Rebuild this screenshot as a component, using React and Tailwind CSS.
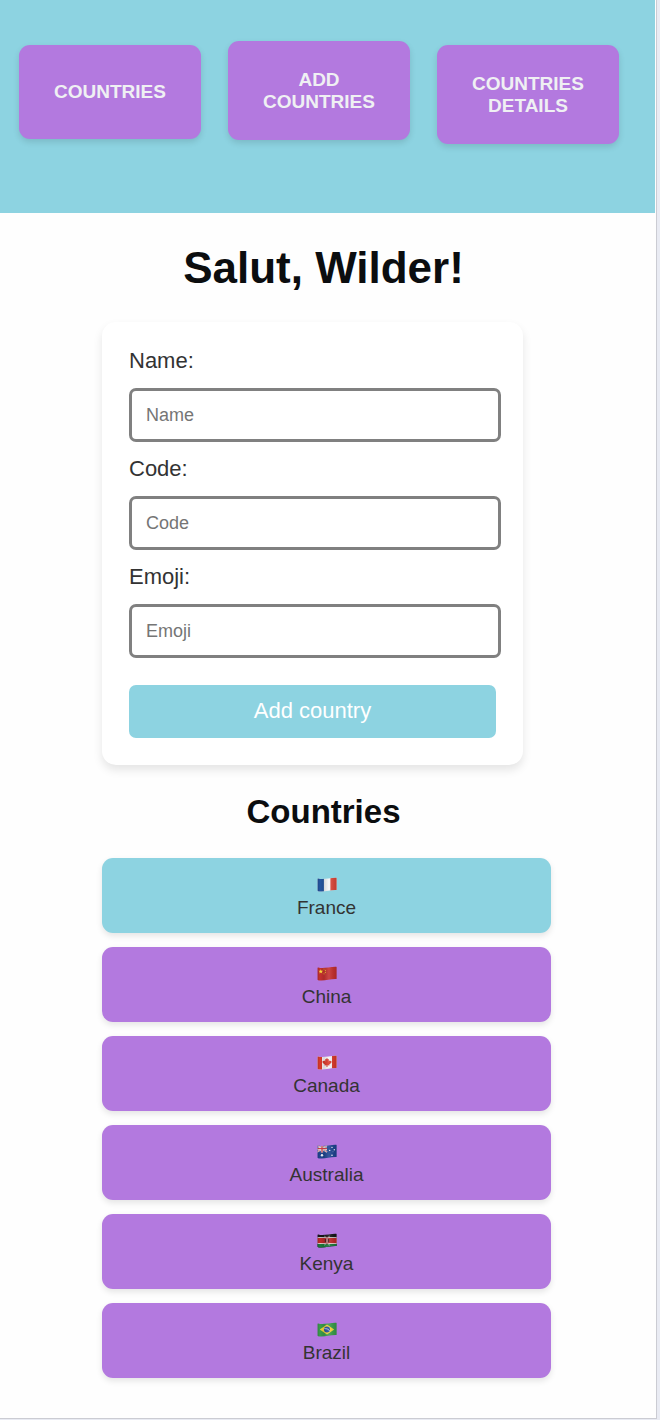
import { useId, useState } from "react";

const flags = {
  France: (
    <>
      <rect width="20" height="15" fill="#f4f5f7" />
      <rect width="6.9" height="15" fill="#2455a0" />
      <rect x="13.4" width="6.6" height="15" fill="#dd4a3c" />
    </>
  ),
  China: (
    <>
      <rect width="20" height="15" fill="#c5302f" />
      <path d="M3.8 3.2l.6 1.6h1.7L4.8 5.9l.5 1.7-1.5-1-1.5 1 .5-1.7-1.3-1.1h1.7z" fill="#fbdc3c" />
      <g fill="#e9a92f">
        <circle cx="7" cy="3" r=".6" />
        <circle cx="8.4" cy="4.4" r=".6" />
        <circle cx="8.4" cy="6.4" r=".6" />
        <circle cx="7" cy="7.8" r=".6" />
      </g>
    </>
  ),
  Canada: (
    <>
      <rect width="20" height="15" fill="#f6f4f6" />
      <rect width="5" height="15" fill="#dc3a2c" />
      <rect x="15" width="5" height="15" fill="#dc3a2c" />
      <path
        d="M10 2.8l1 1.7 1-.5-.3 2.4 1.3-1.1.3.7 1.3-.1-.5 1.3.6.4-2.4 2 .2.8-2-.2v1.9h-1v-1.9l-2 .2.2-.8-2.4-2 .6-.4-.5-1.3 1.3.1.3-.7 1.3 1.1L8 4l1 .5z"
        fill="#dc3a2c"
      />
    </>
  ),
  Australia: (
    <>
      <rect width="20" height="15" fill="#1f4591" />
      <path d="M0 1.2l10 6.8M10 1.2L0 8" stroke="#f2f2f6" strokeWidth="1.7" />
      <path d="M0 1.2l10 6.8M10 1.2L0 8" stroke="#d2404c" strokeWidth=".6" />
      <path d="M5 0v8.4M0 4.7h10" stroke="#f2f2f6" strokeWidth="2.4" />
      <path d="M5 0v8.4M0 4.7h10" stroke="#d2404c" strokeWidth="1.3" />
      <g fill="#f2f4fa">
        <circle cx="5" cy="11.2" r="1.2" />
        <circle cx="15" cy="3.4" r=".7" />
        <circle cx="12.7" cy="6.4" r=".7" />
        <circle cx="17.3" cy="5.8" r=".7" />
        <circle cx="15" cy="11.2" r=".8" />
        <circle cx="16" cy="7.8" r=".4" />
      </g>
    </>
  ),
  Kenya: (
    <>
      <rect width="20" height="15" fill="#171717" />
      <rect y="4.2" width="20" height="6.8" fill="#eee9e9" />
      <rect y="5" width="20" height="5.2" fill="#c0282b" />
      <rect y="11" width="20" height="4" fill="#1c7a3c" />
      <path d="M7.6 2.8l4.8 9.6M12.4 2.8l-4.8 9.6" stroke="#eee9e9" strokeWidth=".6" />
      <ellipse cx="10" cy="7.5" rx="1.9" ry="3.8" fill="#8c1c20" />
      <path d="M10 4v7" stroke="#f4f0f0" strokeWidth=".8" />
      <path d="M8.3 6v3M11.7 6v3" stroke="#171717" strokeWidth=".7" />
    </>
  ),
  Brazil: (
    <>
      <rect width="20" height="15" fill="#3a9d4b" />
      <path d="M10 2.6l7.2 4.9-7.2 4.9-7.2-4.9z" fill="#f6d53a" />
      <circle cx="10" cy="7.5" r="3" fill="#27509b" />
      <path d="M7.3 6.6q3-.5 5.4 2" stroke="#eef2f6" strokeWidth=".7" fill="none" />
    </>
  ),
};

function Flag({ name }) {
  const id = useId();
  return (
    <svg viewBox="0 0 20 15" className="h-[15px] w-5" aria-hidden="true">
      <defs>
        <clipPath id={`${id}c`}>
          <path d="M1.1 1.5C7 3 12 .6 19.2.7q.4 0 .4.5v11.2q0 .5-.5.5C13 12.6 7 15.4 1.1 14.2q-.5-.1-.5-.7V2q0-.6.5-.5z" />
        </clipPath>
        <linearGradient id={`${id}g`}>
          <stop offset="0" stopColor="#000" stopOpacity=".2" />
          <stop offset=".15" stopColor="#000" stopOpacity="0" />
          <stop offset=".35" stopColor="#000" stopOpacity=".12" />
          <stop offset=".6" stopColor="#fff" stopOpacity=".1" />
          <stop offset=".85" stopColor="#000" stopOpacity=".08" />
          <stop offset="1" stopColor="#000" stopOpacity=".16" />
        </linearGradient>
      </defs>
      <g clipPath={`url(#${id}c)`}>
        {flags[name]}
        <rect width="20" height="15" fill={`url(#${id}g)`} />
      </g>
    </svg>
  );
}

const links = [
  { label: "Countries", size: "mt-1 min-h-[94px]" },
  { label: "Add countries", size: "min-h-[99px]" },
  { label: "Countries details", size: "mt-1 min-h-[99px]" },
];

const fields = ["Name", "Code", "Emoji"];

export default function App() {
  const [selected, setSelected] = useState("France");

  return (
    <div className="min-h-screen bg-[#e9ebf3] pr-[3px] pb-[1px] font-['Liberation_Sans',Arial,sans-serif]">
      <div className="border-r border-b border-[#cbccd3] bg-[#fefefe]">
        <header className="mr-px h-[213px] bg-[#8dd3e1] pt-[41px] pr-9 pl-[19px]">
          <nav className="flex items-start gap-[27px]">
            {links.map(({ label, size }) => (
              <a
                key={label}
                href="#"
                className={`${size} flex flex-1 items-center justify-center rounded-[11px] bg-[#b379df] px-6 text-center text-[19px] leading-[22px] font-bold text-[#eff0f3] uppercase shadow-[0_3px_6px_rgba(0,0,0,0.12)]`}
              >
                {label}
              </a>
            ))}
          </nav>
        </header>

        <main className="pt-[30px] pr-[105px] pb-10 pl-[102px]">
          <h1 className="pr-[6px] text-center text-[44px] leading-[50px] font-bold text-[#0b0d0f]">
            Salut, Wilder!
          </h1>

          <form
            onSubmit={(event) => event.preventDefault()}
            className="mt-[29px] mr-7 rounded-[14px] bg-white pt-[26px] pr-[22px] pb-[27px] pl-[27px] shadow-[0_5px_10px_rgba(0,0,0,0.1)]"
          >
            <div className="flex flex-col gap-[14px]">
              {fields.map((field) => (
                <div key={field} className="flex flex-col gap-[14px]">
                  <label htmlFor={field} className="text-[22px] leading-[26px] text-[#333]">
                    {field}:
                  </label>
                  <input
                    id={field}
                    type="text"
                    placeholder={field}
                    className="h-[54px] w-full rounded-[7px] border-3 border-[#808080] bg-white px-[14px] text-lg text-[#333] placeholder:text-[#757575]"
                  />
                </div>
              ))}
            </div>
            <div className="mt-[27px] pr-[5px]">
              <button
                type="submit"
                className="h-[53px] w-full rounded-[7px] bg-[#8dd3e1] pb-px text-[22px] leading-[26px] text-white"
              >
                Add country
              </button>
            </div>
          </form>

          <h2 className="mt-7 pr-[6px] text-center text-[33px] leading-[38px] font-bold text-[#0b0d0f]">
            Countries
          </h2>

          <ul className="mt-[27px] flex flex-col gap-[14px]">
            {Object.keys(flags).map((name) => (
              <li key={name}>
                <button
                  type="button"
                  onClick={() => setSelected(name)}
                  className={`${
                    selected === name ? "bg-[#8dd3e1]" : "bg-[#b379df]"
                  } flex h-[75px] w-full flex-col items-center gap-[5px] rounded-[11px] pt-[19px] text-[19px] leading-[22px] text-[#333] shadow-[0_3px_6px_rgba(0,0,0,0.1)]`}
                >
                  <Flag name={name} />
                  {name}
                </button>
              </li>
            ))}
          </ul>
        </main>
      </div>
    </div>
  );
}
